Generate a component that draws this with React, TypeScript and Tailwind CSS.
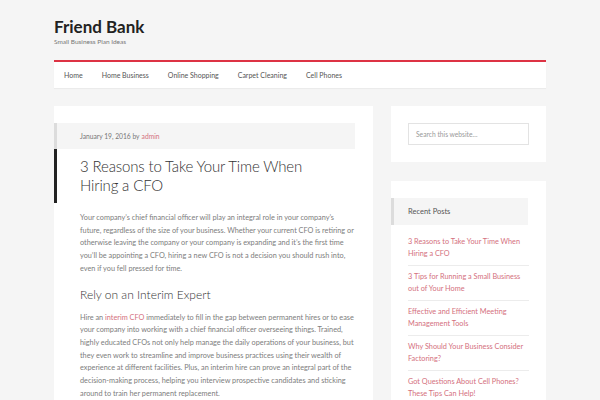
import React from 'react';

const navItems = ['Home', 'Home Business', 'Online Shopping', 'Carpet Cleaning', 'Cell Phones'];

const recentPosts = [
  '3 Reasons to Take Your Time When Hiring a CFO',
  '3 Tips for Running a Small Business out of Your Home',
  'Effective and Efficient Meeting Management Tools',
  'Why Should Your Business Consider Factoring?',
  'Got Questions About Cell Phones? These Tips Can Help!',
];

export default function App() {
  return (
    <div
      className="h-[400px] w-[600px] overflow-hidden bg-[#f5f5f5] text-[#333]"
      style={{ fontFamily: 'Lato, "Noto Sans", sans-serif' }}
    >
      <div className="ml-[54px] w-[492px]">
        {/* site header */}
        <header className="pt-[17px]">
          <h1 className="text-[17px] font-bold leading-[20px] text-[#222]">Friend Bank</h1>
          <p className="mt-[1px] text-[6.5px] leading-[8px] text-[#777]">Small Business Plan Ideas</p>
        </header>

        {/* nav */}
        <nav className="mt-[14px] flex h-[28px] items-center gap-[19px] border-t-2 border-[#dd3344] bg-white pl-[10px] text-[7px] text-[#555] shadow-[0_1px_1px_rgba(0,0,0,0.04)]">
          {navItems.map((item) => (
            <span key={item}>{item}</span>
          ))}
        </nav>

        <div className="mt-[18px] flex gap-[18px]">
          {/* main content */}
          <main className="h-[320px] w-[319px] bg-white pt-[17px]">
            <div className="flex h-[26px] w-[301px] items-center border-l-[3px] border-[#dcdcdc] bg-[#f5f5f5] pl-[23px] text-[6.7px] text-[#777]">
              January 19, 2016 by <span className="ml-[2px] text-[#d4707e]">admin</span>
            </div>
            <h2 className="border-l-[3px] border-[#222] py-[8px] pl-[23px] pr-[40px] text-[15px] font-light leading-[19px] tracking-[-0.15px] text-[#333]">
              3 Reasons to Take Your Time When Hiring a CFO
            </h2>
            <div className="pl-[26px] pr-[16px] pt-[9px] text-[7.3px] leading-[12.7px] text-[#7d7d7d]">
              <p>
                Your company’s chief financial officer will play an integral role in your company’s future,
                regardless of the size of your business. Whether your current CFO is retiring or otherwise
                leaving the company or your company is expanding and it’s the first time you’ll be appointing a
                CFO, hiring a new CFO is not a decision you should rush into, even if you fell pressed for time.
              </p>
              <h3 className="mt-[11px] text-[12px] font-light leading-[16px] text-[#333]">Rely on an Interim Expert</h3>
              <p className="mt-[9px]">
                Hire an <span className="text-[#d4707e]">interim CFO</span> immediately to fill in the gap between
                permanent hires or to ease your company into working with a chief financial officer overseeing
                things. Trained, highly educated CFOs not only help manage the daily operations of your business,
                but they even work to streamline and improve business practices using their wealth of experience
                at different facilities. Plus, an interim hire can prove an integral part of the decision-making
                process, helping you interview prospective candidates and sticking around to train her permanent
                replacement.
              </p>
            </div>
          </main>

          {/* sidebar */}
          <aside className="w-[155px]">
            <div className="h-[56px] bg-white p-[17px]">
              <div className="flex h-[22px] w-[121px] items-center border border-[#e3e3e3] bg-white px-[7px] text-[6.7px] text-[#999]">
                Search this website…
              </div>
            </div>
            <div className="mt-[19px] h-[240px] bg-white pt-[17px]">
              <div className="flex h-[27px] w-[137px] items-center border-l-[3px] border-[#dcdcdc] bg-[#f5f5f5] pl-[14px] text-[7.5px] text-[#555]">
                Recent Posts
              </div>
              <ul className="px-[17px] pt-[6px] text-[7.3px] leading-[12px] text-[#d4707e]">
                {recentPosts.map((post, i) => (
                  <li
                    key={post}
                    className={
                      'py-[5px] ' + (i < recentPosts.length - 1 ? 'border-b border-[#ececec]' : '')
                    }
                  >
                    {post}
                  </li>
                ))}
              </ul>
            </div>
          </aside>
        </div>
      </div>
    </div>
  );
}
